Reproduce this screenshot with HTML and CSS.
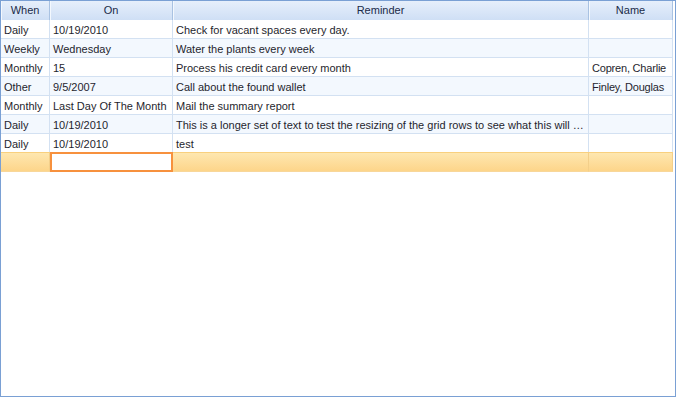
FILE: index.html
```html
<!DOCTYPE html>
<html>
<head>
<meta charset="utf-8">
<link rel="stylesheet" href="styles.css">
</head>
<body>
<div class="frame">
  <div class="grid">
    <div class="hd">When</div><div class="hd">On</div><div class="hd">Reminder</div><div class="hd">Name</div>

    <div class="c">Daily</div><div class="c">10/19/2010</div><div class="c">Check for vacant spaces every day.</div><div class="c nm"></div>
    <div class="c alt">Weekly</div><div class="c alt">Wednesday</div><div class="c alt">Water the plants every week</div><div class="c alt nm"></div>
    <div class="c">Monthly</div><div class="c">15</div><div class="c">Process his credit card every month</div><div class="c nm">Copren, Charlie</div>
    <div class="c alt">Other</div><div class="c alt">9/5/2007</div><div class="c alt">Call about the found wallet</div><div class="c alt nm">Finley, Douglas</div>
    <div class="c">Monthly</div><div class="c">Last Day Of The Month</div><div class="c">Mail the summary report</div><div class="c nm"></div>
    <div class="c alt">Daily</div><div class="c alt">10/19/2010</div><div class="c alt">This is a longer set of text to test the resizing of the grid rows to see what this will look like when it wraps</div><div class="c alt nm"></div>
    <div class="c">Daily</div><div class="c">10/19/2010</div><div class="c">test</div><div class="c nm"></div>

    <div class="c nr"></div><div class="c nr edit"></div><div class="c nr"></div><div class="c nr"></div>
  </div>
</div>
</body>
</html>
```

FILE: styles.css
```css
html, body {
  margin: 0;
  padding: 0;
  background: #ffffff;
}

.frame {
  width: 676px;
  height: 397px;
  box-sizing: border-box;
  border: 1px solid #7aa0d4;
  background: #ffffff;
}

.grid {
  display: grid;
  grid-template-columns: 49px 123px 416px 84px;
  grid-auto-rows: 19px;
  width: 672px;
  font-family: "Liberation Sans", Arial, sans-serif;
  font-size: 11px;
}

.hd {
  height: 20px;
  box-sizing: border-box;
  background: linear-gradient(#e6effb, #cfdff5);
  border-right: 1px solid #a9c2e2;
  border-bottom: 1px solid #9db7da;
  box-shadow: inset 1px 0 0 #f3f8fe;
  color: #1b2b48;
  text-align: center;
  line-height: 19px;
  white-space: nowrap;
  overflow: hidden;
}

.c {
  box-sizing: border-box;
  border-right: 1px solid #d3e1f2;
  border-bottom: 1px solid #d3e1f2;
  padding: 1px 3px 0;
  line-height: 18px;
  color: #1f1f2e;
  white-space: nowrap;
  overflow: hidden;
  text-overflow: ellipsis;
  background: #ffffff;
}

.c.nm {
  letter-spacing: -0.2px;
  padding-right: 1px;
}

.c.alt {
  background: #f3f8fe;
}

.c.nr {
  background: linear-gradient(#fee7b0, #fdd58a);
  border-right: 1px solid #f3cf8a;
  border-bottom: 1px solid #f8d79a;
  border-top: 1px solid #f9d07e;
  margin-top: -1px;
  height: 20px;
}

.c.nr.edit {
  background: #ffffff;
  border: 2px solid #f7913d;
}
```
